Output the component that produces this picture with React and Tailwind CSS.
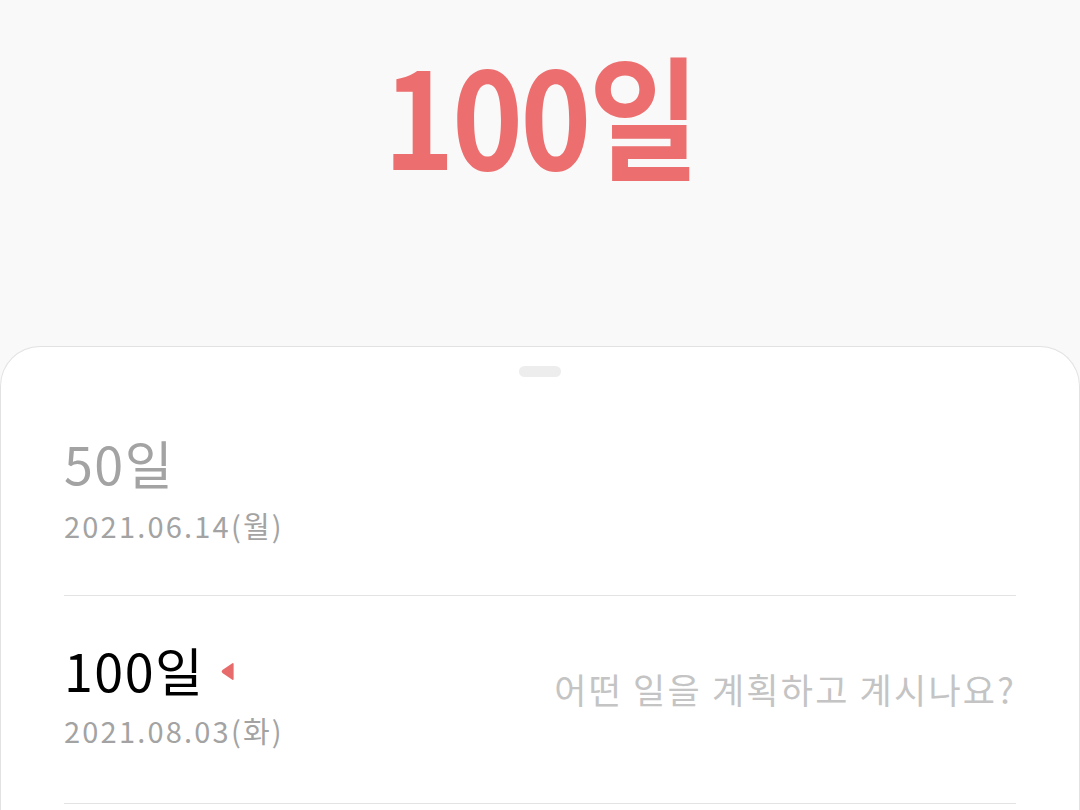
import React from 'react';

const font = { fontFamily: '"Noto Sans CJK KR", "Noto Sans", sans-serif' };

const milestones = [
  { label: '50일', date: '2021.06.14(월)', past: true },
  { label: '100일', date: '2021.08.03(화)', current: true, note: '어떤 일을 계획하고 계시나요?' },
];

const Marker = () => (
  <svg width="14" height="19" viewBox="0 0 14 19" className="mt-[2px]">
    <path d="M12.3 1.2 L2.4 8 Q0.8 9.5 2.4 11 L12.3 17.8 Q13.6 18.5 13.6 17 L13.6 2 Q13.6 0.5 12.3 1.2 Z" fill="#e86b6b" />
  </svg>
);

export default function App() {
  const [first, second] = milestones;
  return (
    <div className="w-[1080px] h-[810px] overflow-hidden bg-[#f9f9f9] flex flex-col" style={font}>
      <div className="h-[346px] shrink-0 flex justify-center pt-[45px]">
        <h1 className="inline-block text-[134px] font-bold leading-none text-[#ec6e6e] tracking-[-3px] scale-x-[0.9]">
          100일
        </h1>
      </div>

      <div className="flex-1 bg-white rounded-t-[40px] border border-b-0 border-[#e2e2e2] flex flex-col">
        <div className="flex justify-center pt-[19px]">
          <div className="w-[42px] h-[11px] rounded-full bg-[#ededed]" />
        </div>

        <div className="px-[63px] flex flex-col">
          <div className="border-b border-[#e3e3e3] pt-[60px] pb-[55px] flex flex-col">
            <span className="text-[52px] leading-none tracking-[1.5px] text-[#a3a3a3]">{first.label}</span>
            <span className="mt-[22px] text-[29px] leading-none tracking-[2.2px] text-[#a3a3a3]">{first.date}</span>
          </div>

          <div className="border-b border-[#e3e3e3] pt-[48px] pb-[58px] flex items-center justify-between">
            <div className="flex flex-col">
              <div className="flex items-center gap-[16px]">
                <span className="text-[52px] leading-none tracking-[1.5px] text-black">{second.label}</span>
                <Marker />
              </div>
              <span className="mt-[20px] text-[29px] leading-none tracking-[2.2px] text-[#a3a3a3]">{second.date}</span>
            </div>
            <span className="text-[35px] leading-none tracking-[2.2px] text-[#c4c4c4] mt-[-12px]">{second.note}</span>
          </div>
        </div>
      </div>
    </div>
  );
}
